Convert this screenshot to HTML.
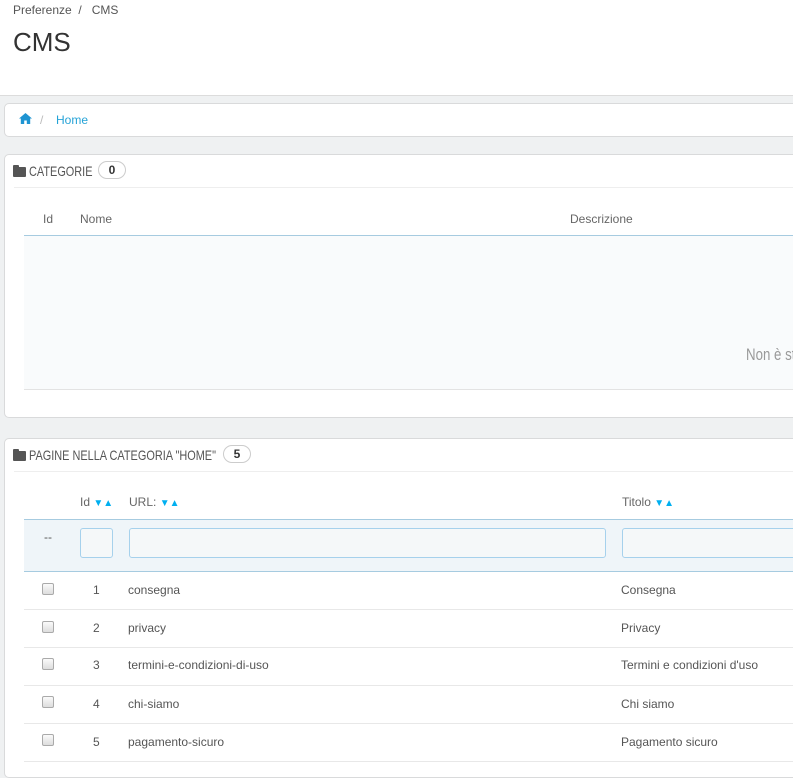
<!DOCTYPE html>
<html><head><meta charset="utf-8"><style>
*{margin:0;padding:0;box-sizing:border-box}
body{width:793px;height:764px;overflow:hidden;background:#eff1f2;font-family:"Liberation Sans",sans-serif;font-size:12px;color:#555;position:relative}
.a{position:absolute;white-space:nowrap}
.top{position:absolute;left:0;top:0;width:793px;height:96px;background:#fff;border-bottom:1px solid #dcdcdc}
.panel{position:absolute;left:4px;width:800px;background:#fff;border:1px solid #d9dadb;border-radius:5px}
.cond{transform:scaleX(0.78);transform-origin:0 0}
.badge{position:absolute;height:18px;border:1px solid #ccc;border-radius:9px;background:#fff;font-weight:bold;color:#333;text-align:center;line-height:16px;font-size:12px}
.folder{position:absolute;width:13px;height:10px;background:#555;border-radius:1px}
.folder:before{content:"";position:absolute;left:0;top:-2px;width:6px;height:3px;background:#555;border-radius:1px 1px 0 0}
.hr{position:absolute;height:1px;background:#eee}
.cb{position:absolute;left:42px;width:12px;height:12px;border:1px solid #aaa;border-radius:2px;background:linear-gradient(#fafafa,#ddd)}
.arr{color:#00aff0;font-size:10px;letter-spacing:0}
.inp{position:absolute;top:528px;height:30px;border:1px solid #a6d1ec;border-radius:3px;background:#f5f8f9}
</style></head><body>
<div class="top">
<div class="a" style="left:13px;top:3px;font-size:12px;color:#555">Preferenze&nbsp;&nbsp;/&nbsp;&nbsp;&nbsp;CMS</div>
<div class="a" style="left:13px;top:27px;font-size:26px;color:#333">CMS</div>
</div>
<div class="panel" style="top:103px;height:34px">
<svg class="a" style="left:14px;top:9px" width="13" height="11" viewBox="0 0 13 11"><path d="M6.5 0L0 5.5h1.8V11h3.4V7.5h2.6V11h3.4V5.5H13z" fill="#1e94d2"/></svg>
<div class="a" style="left:35px;top:9px;color:#bbb">/</div>
<div class="a" style="left:51px;top:9px;color:#25a3d7">Home</div>
</div>
<div class="panel" style="top:154px;height:264px">
<div class="folder" style="left:8px;top:12px"></div>
<div class="a cond" style="left:24px;top:8px;font-size:14px;color:#555">CATEGORIE</div>
<div class="badge" style="left:93px;top:6px;width:28px">0</div>
<div class="hr" style="left:9px;right:0;top:32px"></div>
<div class="a" style="left:38px;top:57px;color:#666">Id</div>
<div class="a" style="left:75px;top:57px;color:#666">Nome</div>
<div class="a" style="left:565px;top:57px;color:#666">Descrizione</div>
<div class="a" style="left:19px;top:80px;width:790px;height:155px;background:#f9fbfc;border-top:1px solid #a6cbe0;border-bottom:1px solid #e3e3e3"></div>
<div class="a cond" style="left:741px;top:190px;font-size:17px;color:#999">Non è stato</div>
</div>
<div class="panel" style="top:438px;height:340px">
<div class="folder" style="left:8px;top:12px"></div>
<div class="a cond" style="left:24px;top:8px;font-size:14px;color:#555">PAGINE NELLA CATEGORIA "HOME"</div>
<div class="badge" style="left:218px;top:6px;width:28px">5</div>
<div class="hr" style="left:9px;right:0;top:32px"></div>
</div>
<div class="a" style="left:80px;top:495px;color:#666">Id <span class="arr">▼▲</span></div>
<div class="a" style="left:129px;top:495px;color:#666">URL: <span class="arr">▼▲</span></div>
<div class="a" style="left:622px;top:495px;color:#666">Titolo <span class="arr">▼▲</span></div>
<div class="a" style="left:24px;top:519px;width:780px;height:53px;background:#eff5f9;border-top:1px solid #a6cbe0;border-bottom:1px solid #a6cbe0"></div>
<div class="a" style="left:44px;top:530px;color:#555">--</div>
<div class="inp" style="left:80px;width:33px"></div>
<div class="inp" style="left:129px;width:477px"></div>
<div class="inp" style="left:622px;width:190px"></div>

<div class="cb" style="top:583px"></div><div class="a" style="left:93px;top:583px">1</div><div class="a" style="left:128px;top:583px">consegna</div><div class="a" style="left:621px;top:583px">Consegna</div>
<div class="hr" style="left:24px;width:780px;top:609px;background:#e8e8e8"></div>
<div class="cb" style="top:621px"></div><div class="a" style="left:93px;top:621px">2</div><div class="a" style="left:128px;top:621px">privacy</div><div class="a" style="left:621px;top:621px">Privacy</div>
<div class="hr" style="left:24px;width:780px;top:647px;background:#e8e8e8"></div>
<div class="cb" style="top:658px"></div><div class="a" style="left:93px;top:658px">3</div><div class="a" style="left:128px;top:658px">termini-e-condizioni-di-uso</div><div class="a" style="left:621px;top:658px">Termini e condizioni d'uso</div>
<div class="hr" style="left:24px;width:780px;top:685px;background:#e8e8e8"></div>
<div class="cb" style="top:696px"></div><div class="a" style="left:93px;top:697px">4</div><div class="a" style="left:128px;top:697px">chi-siamo</div><div class="a" style="left:621px;top:697px">Chi siamo</div>
<div class="hr" style="left:24px;width:780px;top:723px;background:#e8e8e8"></div>
<div class="cb" style="top:734px"></div><div class="a" style="left:93px;top:735px">5</div><div class="a" style="left:128px;top:735px">pagamento-sicuro</div><div class="a" style="left:621px;top:735px">Pagamento sicuro</div>
<div class="hr" style="left:24px;width:780px;top:761px;background:#e8e8e8"></div>
</body></html>
